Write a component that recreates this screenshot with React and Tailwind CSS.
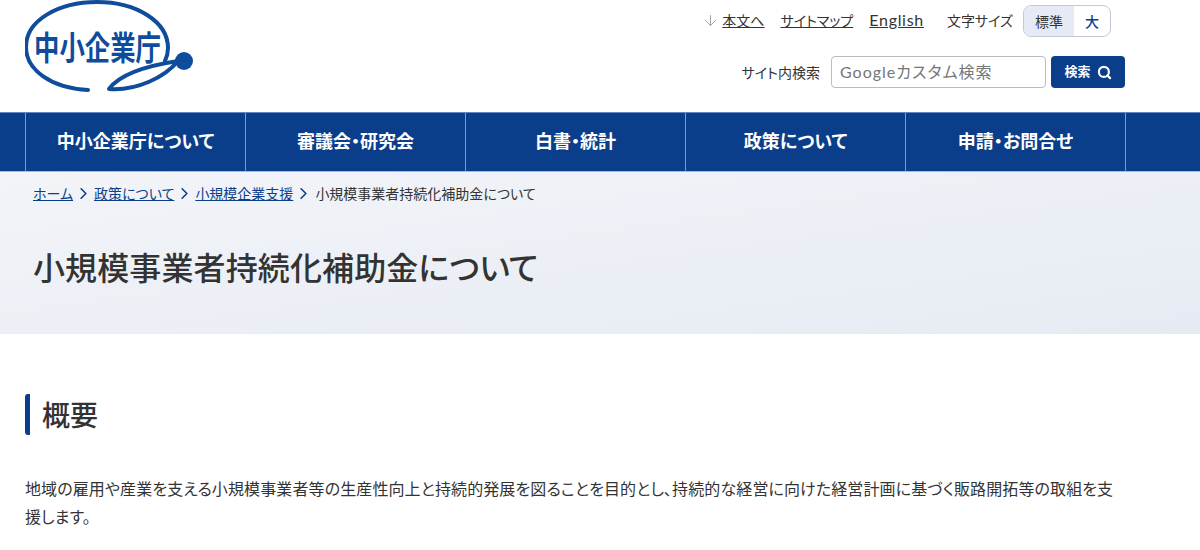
import { ArrowDown, ChevronRight, Search } from 'lucide-react';

const navItems = ['中小企業庁について', '審議会・研究会', '白書・統計', '政策について', '申請・お問合せ'];
const crumbs = ['ホーム', '政策について', '小規模企業支援'];
const font = "font-['Lato','Noto_Sans_CJK_JP',sans-serif]";

function Logo() {
  return (
    <svg width="170" height="96" viewBox="0 0 170 96" className="block">
      <path
        d="M63 90 C26 88 1 70 1 47 C1 20 34 2 72 2 C112 2 143 22 143 48 C143 53 142 57 140 61"
        fill="none"
        stroke="#0f4c9c"
        strokeWidth="4"
        strokeLinecap="round"
      />
      <path
        d="M84 89 C94 75 120 66 153 61 C140 77 112 91 84 89 Z"
        fill="none"
        stroke="#0f4c9c"
        strokeWidth="4"
        strokeLinejoin="round"
      />
      <circle cx="159" cy="61" r="9" fill="#0f4c9c" />
      <text transform="translate(9 60) scale(1 1.3)" fontSize="25.4" fontWeight="700" fill="#0f4c9c" fontFamily="'Noto Sans CJK JP', sans-serif">
        中小企業庁
      </text>
    </svg>
  );
}

function Header() {
  return (
    <header className="h-[112px] bg-white flex justify-between pl-[25px] pr-[75px]">
      <Logo />
      <div className="flex flex-col items-end">
        <div className="h-[36px] mt-[3px] flex items-center text-[14px] text-[#333] [font-feature-settings:'palt']">
          <ArrowDown size={17} strokeWidth={1.25} className="text-[#999] mr-[3px] mb-[2px]" />
          <a className="underline mr-[16px] mb-[2px]">本文へ</a>
          <a className="underline mr-[16px] mb-[2px]">サイトマップ</a>
          <a className="underline text-[16px] tracking-[0.7px] mr-[23px] mb-[2px]">English</a>
          <span className="mr-[10px] text-[14px] mb-[2px]">文字サイズ</span>
          <div className="flex h-[32px] w-[88px] rounded-[8px] border border-[#c3c8d4] overflow-hidden mr-[14px] text-[14px]">
            <span className="w-[50px] bg-[#e6eaf4] flex items-center justify-center">標準</span>
            <span className="flex-1 flex items-center justify-center text-[#0b3e8a] font-medium">大</span>
          </div>
        </div>
        <div className="mt-[17px] flex items-center [font-feature-settings:'palt']">
          <span className="text-[14px] text-[#333] mr-[11px]">サイト内検索</span>
          <div className="w-[215px] h-[32px] rounded-[4px] border border-[#b9bcc4] flex items-center px-[8px] text-[16px] text-[#777] tracking-[1px]">
            Googleカスタム検索
          </div>
          <button className="ml-[5px] w-[74px] h-[32px] rounded-[4px] bg-[#0b3e8a] text-white text-[13px] font-bold flex items-center justify-center gap-[6px]">
            検索
            <Search size={15} strokeWidth={3.5} />
          </button>
        </div>
      </div>
    </header>
  );
}

function Nav() {
  return (
    <nav className="h-[60px] bg-[#0b3e8a] px-[25px] border-t border-[#5f8ac4] border-b-[#9dbbe4] border-b">
      <ul className="flex h-full w-[1101px] border-r border-[#7c9ccb]">
        {navItems.map((item) => (
          <li key={item} className="w-[220px] border-l border-[#7c9ccb] flex items-center justify-center pb-[2px] text-white text-[18px] font-bold [font-feature-settings:'palt']">
            {item}
          </li>
        ))}
      </ul>
    </nav>
  );
}

function Hero() {
  return (
    <section className="h-[162px] bg-gradient-to-br from-[#f2f4f8] to-[#e6ebf3] px-[33px]">
      <div className="h-[42px] flex items-center text-[14px] text-[#333] [font-feature-settings:'palt']">
        {crumbs.map((c) => (
          <span key={c} className="flex items-center">
            <a className="underline text-[#0b3e8a]">{c}</a>
            <ChevronRight size={19} strokeWidth={2} className="text-[#0b3e8a] mx-[1px]" />
          </span>
        ))}
        <span className="ml-[1px]">小規模事業者持続化補助金について</span>
      </div>
      <h1 className="mt-[30px] text-[32px] leading-[48px] font-medium text-[#333] tracking-[0.12px] [font-feature-settings:'palt']">小規模事業者持続化補助金について</h1>
    </section>
  );
}

export default function App() {
  return (
    <div className={`w-[1200px] h-[550px] overflow-hidden bg-white ${font}`}>
      <Header />
      <Nav />
      <Hero />
      <main className="px-[25px]">
        <h2 className="mt-[60px] h-[41px] border-l-[5px] border-[#0b3e8a] rounded-[3px] pl-[12px] flex items-center text-[28px] font-medium text-[#333]">
          概要
        </h2>
        <p className="mt-[40px] w-[1100px] text-[16px] leading-[28px] text-[#333] tracking-[0.11px] [font-feature-settings:'palt']">
          地域の雇用や産業を支える小規模事業者等の生産性向上と持続的発展を図ることを目的とし、持続的な経営に向けた経営計画に基づく販路開拓等の取組を支援します。
        </p>
      </main>
    </div>
  );
}
